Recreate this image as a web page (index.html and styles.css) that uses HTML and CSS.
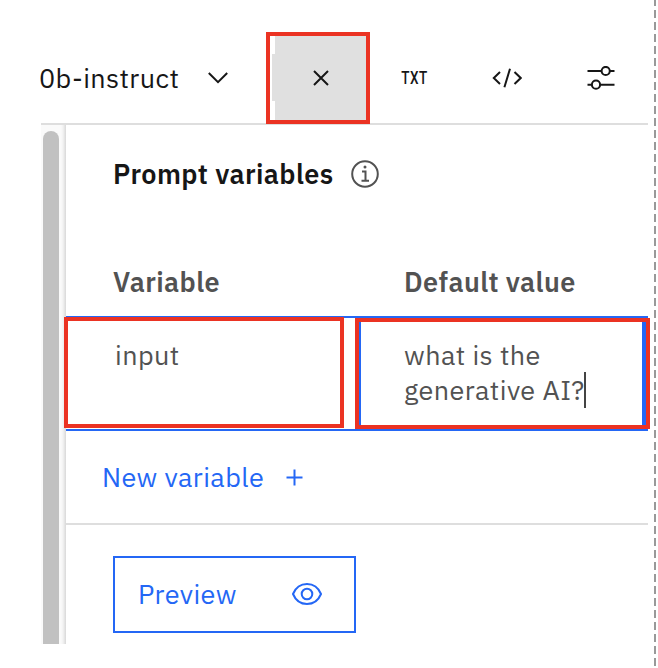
FILE: index.html
```
<!DOCTYPE html>
<html lang="en">
<head>
<meta charset="utf-8">
<title>Prompt variables</title>
<link rel="stylesheet" href="styles.css">
</head>
<body>
<div class="app">
  <header class="toolbar">
    <div class="model"><span class="t t-model">0b-instruct</span>
      <svg class="chevron" viewBox="0 0 20 12"><path d="M.8 1 10 10.200 19.200 1"/></svg>
    </div>
    <button class="tool active" aria-label="Close"><svg width="16" height="16" viewBox="0 0 16 16"><path d="M1 1 15 15M15 1 1 15"/></svg></button>
    <button class="tool txt"><span class="t t-txt">TXT</span></button>
    <button class="tool code" aria-label="Code"><svg width="30" height="20" viewBox="0 0 30 20"><path d="M8 4 1.800 10 8 16M22.500 4 28.700 10 22.500 16M18 .8 12.400 19.200"/></svg></button>
    <button class="tool settings" aria-label="Settings"><svg width="28" height="24" viewBox="0 0 28 24"><path d="M.5 5H14.700M22.800 5H27.500M.5 18.700H5M13.200 18.700H27.500"/><circle cx="18.700" cy="5" r="4.100"/><circle cx="9" cy="18.700" r="4.100"/></svg></button>
  </header>
  <div class="body">
    <div class="scroll"><div class="thumb"></div></div>
    <main class="panel">
      <div class="title"><h1 class="t t-title">Prompt variables</h1>
        <svg width="28" height="28" viewBox="0 0 28 28"><circle cx="14" cy="14" r="12.800"/><path d="M11 11.500H14.500V20.700M10.500 20.700H18"/><circle class="dot" cx="14" cy="7" r="1.500"/></svg>
      </div>
      <div class="row head"><span class="t t-var">Variable</span><span class="t t-def">Default value</span></div>
      <div class="row entry">
        <div><span class="t t-input">input</span></div>
        <div class="value"><span class="t t-what">what is the</span><br><span class="t t-gen">generative AI?</span><i class="caret"></i></div>
      </div>
      <div class="add"><span class="t t-new">New variable</span>
        <svg width="17" height="17" viewBox="0 0 17 17"><path d="M8.500 .5V16.500M.5 8.500H16.500"/></svg>
      </div>
      <div class="footer"><button class="preview"><span class="t t-prev">Preview</span>
        <svg width="30" height="22" viewBox="0 0 30 22"><path d="M1 11C3.500 5 8.500 1 15 1S26.500 5 29 11C26.500 17 21.500 21 15 21S3.500 17 1 11Z"/><circle cx="15" cy="11" r="5.300"/></svg>
      </button></div>
    </main>
  </div>
  <div class="mark mark-close"></div>
  <div class="mark mark-input"></div>
  <div class="mark mark-value"></div>
</div>
<div class="edge"></div>
</body>
</html>
```
FILE: styles.css
```
* { box-sizing: border-box; }
body { margin: 0; width: 658px; height: 668px; overflow: hidden; background: #fff; display: flex; position: relative; font: 27px/35px "IBM Plex Sans", "Noto Sans", sans-serif; letter-spacing: .42px; color: #525252; }
.app { width: 607px; height: 644px; margin-left: 41px; flex: none; }
button { border: 0; background: none; padding: 0; font: inherit; letter-spacing: inherit; color: inherit; }
svg { fill: none; stroke: currentColor; stroke-width: 2; flex: none; display: block; }
.t { white-space: nowrap; display: inline-block; }
.toolbar { height: 125px; padding-top: 32px; border-bottom: 2px solid #dedede; display: grid; grid-template-columns: 231px 94px 94px 94px 94px; color: #161616; }
.model { height: 92px; display: flex; align-items: center; }
.t-model { margin-left: -2px; margin-bottom: 2px; width: 140px; }
.chevron { width: 20px; height: 12px; margin-left: 29px; }
.tool { height: 92px; display: flex; align-items: center; justify-content: center; }
.active { background: linear-gradient(#e0e0e0, #e0e0e0) 0 22px / 3px 47px no-repeat, linear-gradient(#e0e0e0, #e0e0e0) 3px 0 no-repeat; padding-left: 4px; }
.txt { font: 500 19px/20px Roboto, sans-serif; letter-spacing: .6px; padding-left: 3px; }
.t-txt { transform: scaleX(.71); }
.code { padding-left: 0; }
.body { display: flex; height: 519px; }
.scroll { width: 25px; padding: 6px 0 0 2px; background: linear-gradient(90deg, #fafafa 20px, #f2f2f2 22px, #d8d8d8 25px); }
.thumb { width: 15.500px; height: 513px; border-radius: 8px 8px 0 0; background: #c1c1c1; }
.panel { width: 582px; }
.title { height: 98px; padding-left: 47px; display: flex; align-items: center; gap: 17px; }
h1 { margin: 0 0 2px; font: inherit; font-weight: 600; color: #161616; }
.dot { fill: currentColor; stroke: none; }
.row { display: grid; grid-template-columns: 338px 1fr; }
.row > :first-child { padding-left: 47px; }
.head { height: 93px; padding-top: 41px; font-weight: 600; }
.entry { height: 115px; padding-top: 19px; border: solid #2467f5; border-width: 2px 0; }
.t-input { margin-left: 2px; }
.caret { display: inline-block; width: 2px; height: 36px; background: #444; vertical-align: -8px; margin: -5px 0 0 -1px; }
.add { height: 94px; padding-left: 36px; border-bottom: 2px solid #dedede; display: flex; align-items: center; gap: 22px; color: #2467f5; }
.t-new { margin-bottom: 2px; }
.footer { padding: 30.500px 0 0 47px; }
.preview { width: 243px; height: 77px; border: 2px solid #2467f5; padding: 0 32px 0 23px; display: flex; align-items: center; justify-content: space-between; color: #2467f5; }
.t-prev { margin-bottom: 2px; }
.mark { position: absolute; border: 4px solid #eb3323; }
.mark-close { left: 266px; top: 32px; width: 104px; height: 92px; }
.mark-input { left: 64px; top: 317px; width: 280px; height: 111px; }
.mark-value { left: 355px; top: 318px; width: 295px; height: 111px; box-shadow: inset 2px 0 #2467f5, inset -4px 0 #2467f5; }
.edge { position: absolute; left: 654px; top: 0; width: 2px; height: 668px; background: repeating-linear-gradient(#999 0 6px, #fff 6px 10px, #999 10px 12px); }
```
